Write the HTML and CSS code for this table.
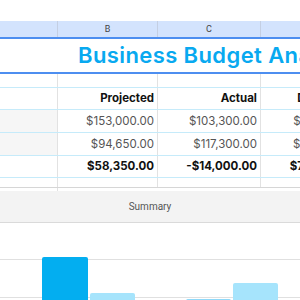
FILE: index.html
```html
<!DOCTYPE html>
<html>
<head>
<meta charset="utf-8">
<link rel="stylesheet" href="styles.css">
</head>
<body>
<div class="sheet">
  <div class="topbar"></div>
  <div class="row colhead">
    <div class="cell a"></div>
    <div class="cell b">B</div>
    <div class="cell c">C</div>
    <div class="cell d">D</div>
  </div>
  <div class="titlerow"><span class="title">Business Budget Analysis</span></div>
  <div class="row blank"><div class="cell a"></div><div class="cell b"></div><div class="cell c"></div><div class="cell d"></div></div>
  <div class="row head">
    <div class="cell a"></div>
    <div class="cell b">Projected</div>
    <div class="cell c">Actual</div>
    <div class="cell d">Difference</div>
  </div>
  <div class="row data">
    <div class="cell a shade"></div>
    <div class="cell b">$153,000.00</div>
    <div class="cell c">$103,300.00</div>
    <div class="cell d">$49,700.00</div>
  </div>
  <div class="row data">
    <div class="cell a shade"></div>
    <div class="cell b">$94,650.00</div>
    <div class="cell c">$117,300.00</div>
    <div class="cell d">$22,650.00</div>
  </div>
  <div class="row data total">
    <div class="cell a"></div>
    <div class="cell b">$58,350.00</div>
    <div class="cell c">-$14,000.00</div>
    <div class="cell d">$72,350.00</div>
  </div>
  <div class="row blank2"><div class="cell a"></div><div class="cell b"></div><div class="cell c"></div><div class="cell d"></div></div>
  <div class="gap"><div class="cell a"></div></div>
  <div class="chart">
    <div class="charttitle">Summary</div>
    <div class="plot">
      <div class="group">
        <div class="bar dark" style="height:44px"></div>
        <div class="bar light" style="height:8px"></div>
      </div>
      <div class="group">
        <div class="bar mid" style="height:2px"></div>
        <div class="bar light" style="height:18px"></div>
      </div>
    </div>
  </div>
</div>
</body>
</html>
```

FILE: styles.css
```css
html, body {
  margin: 0;
  padding: 0;
  background: #fff;
  overflow: hidden;
}
.sheet {
  width: 300px;
  height: 300px;
  overflow: hidden;
  font-family: "Inter", "Roboto", sans-serif;
  color: #222;
}
.topbar {
  height: 21px;
  background: #fff;
}
.row {
  display: flex;
  width: 420px;
}
.cell {
  box-sizing: border-box;
  flex: none;
  border-right: 1px solid #e2e2e2;
  white-space: nowrap;
  overflow: hidden;
}
.cell.a { width: 58px; }
.cell.b { width: 100px; }
.cell.c { width: 103px; }
.cell.d { width: 99px; }

.colhead {
  height: 16px;
  background: #d3e3fd;
  font-family: "Roboto", sans-serif;
  font-size: 9px;
  color: #444;
}
.colhead .cell {
  border-right-color: #c4cfe3;
  text-align: center;
  line-height: 16px;
}
.titlerow {
  height: 33px;
  border-top: 2px solid #4d8ef0;
  border-bottom: 2px solid #4d8ef0;
  box-sizing: content-box;
  white-space: nowrap;
  padding-left: 78px;
}
.title {
  font-family: "Inter", sans-serif;
  font-weight: 600;
  font-size: 22px;
  letter-spacing: 0.4px;
  color: #08a9f0;
  line-height: 33px;
}
.blank {
  height: 13px;
  border-bottom: 1px solid #c6ebfa;
}
.head, .data {
  border-bottom: 1px solid #c6ebfa;
  font-size: 11.5px;
}
.head {
  height: 21px;
  font-weight: 700;
  color: #111;
}
.data {
  height: 22px;
  color: #555;
}
.data.total {
  height: 21px;
  font-weight: 700;
  color: #111;
}
.head .cell, .data .cell {
  display: flex;
  align-items: flex-end;
  justify-content: flex-end;
  padding: 0 3px 4px 0;
}
.shade {
  background: #f6f6f6;
}
.blank2 {
  height: 9px;
  border-bottom: 1px solid #d6d6d6;
}
.gap {
  height: 3px;
}
.gap .cell { height: 3px; }
.chart {
  background: #fff;
}
.charttitle {
  height: 31px;
  background: #f3f3f3;
  border-bottom: 1px solid #dadada;
  text-align: center;
  font-family: "Roboto", sans-serif;
  font-size: 10px;
  line-height: 31px;
  color: #555;
}
.plot {
  height: 78px;
  display: flex;
  align-items: flex-end;
  gap: 51px;
  padding-left: 42px;
  background:
    linear-gradient(#e0e0e0, #e0e0e0) 0 36px / 100% 1px no-repeat,
    linear-gradient(#e0e0e0, #e0e0e0) 0 74px / 100% 1px no-repeat;
}
.group {
  display: flex;
  align-items: flex-end;
  gap: 2px;
}
.bar {
  width: 46px;
  border-radius: 2px 2px 0 0;
}
.dark { background: #03aef0; }
.light { background: #a6e4fc; width: 45px; }
.mid { background: #8fd9f9; width: 45px; }
```
